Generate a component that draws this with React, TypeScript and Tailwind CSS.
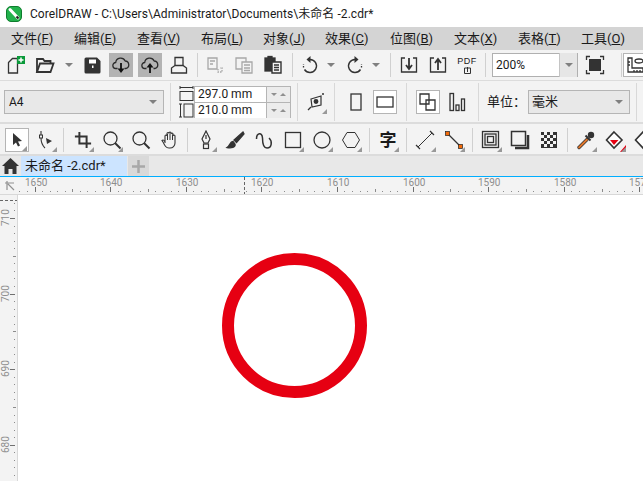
import type { ReactNode } from 'react';

const INK = '#333333';

// toolbar slot: 29px wide with a 24px box inside
function Slot({ children, active, on, corner, className = '' }: { children?: ReactNode; active?: boolean; on?: boolean; corner?: boolean; className?: string }) {
  return (
    <div className={`w-[29px] h-[24px] shrink-0 pl-[2px] ${className}`}>
      <div className={`relative w-[24px] h-[24px] flex items-center justify-center ${active ? 'bg-[#b3b3b3]' : ''} ${on ? 'bg-white border border-[#b5b5b5]' : ''}`}>
        {children}
        {corner && <span className="absolute right-px bottom-0 w-0 h-0 border-l-[5px] border-l-transparent border-b-[5px] border-b-[#999999]" />}
      </div>
    </div>
  );
}

function Sep({ className = '' }: { className?: string }) {
  return <div className={`w-px h-[24px] bg-[#d0d0d0] shrink-0 ${className}`} />;
}

function Tall({ className = '' }: { className?: string }) {
  return <div className={`w-px h-[38px] bg-[#d8d8d8] shrink-0 ${className}`} />;
}

function Drop({ className = '' }: { className?: string }) {
  return (
    <div className={`h-[24px] flex items-center justify-center shrink-0 ${className}`}>
      <span className="w-0 h-0 border-x-[4px] border-x-transparent border-t-[4px] border-t-[#808080]" />
    </div>
  );
}

function Ic({ children, size = 20, vb = 20 }: { children: ReactNode; size?: number; vb?: number }) {
  return (
    <svg width={size} height={size} viewBox={`0 0 ${vb} ${vb}`} fill="none" stroke={INK} strokeWidth="1.3">
      {children}
    </svg>
  );
}

const menus = [
  { t: '文件', k: 'F', w: 'w-[63px]' },
  { t: '编辑', k: 'E', w: 'w-[63px]' },
  { t: '查看', k: 'V', w: 'w-[64px]' },
  { t: '布局', k: 'L', w: 'w-[62px]' },
  { t: '对象', k: 'J', w: 'w-[62px]' },
  { t: '效果', k: 'C', w: 'w-[65px]' },
  { t: '位图', k: 'B', w: 'w-[64px]' },
  { t: '文本', k: 'X', w: 'w-[64px]' },
  { t: '表格', k: 'T', w: 'w-[63px]' },
  { t: '工具', k: 'O', w: 'w-[60px]' },
];

function Cloud({ up }: { up?: boolean }) {
  return (
    <Ic size={18} vb={18}>
      <path d="M5.500 12.500H4a3 3 0 0 1-.3-6A5 5 0 0 1 13.200 5a3.800 3.800 0 0 1 .6 7.500H12.500" stroke="#2b2b2b" />
      {up ? (
        <g>
          <path d="M9 17V10" stroke="#111111" strokeWidth="1.800" />
          <path d="M5.500 11.500 9 7l3.500 4.500z" fill="#111111" stroke="none" />
        </g>
      ) : (
        <g>
          <path d="M9 7v7" stroke="#111111" strokeWidth="1.800" />
          <path d="M5.500 12.500 9 17l3.500-4.500z" fill="#111111" stroke="none" />
        </g>
      )}
    </Ic>
  );
}

function TopRuler() {
  const labels = ['1650', '1640', '1630', '1620', '1610', '1600', '1590', '1580', '157'];
  const ticks: ReactNode[] = [];
  for (let i = -4; i < 86; i++) {
    const x = 34.5 + i * 7.56;
    if (i % 10 === 0) continue;
    const mid = i % 5 === 0;
    ticks.push(<rect key={i} x={Math.round(x)} y={mid ? 12 : 14} width="1" height={mid ? 3 : 1} fill="#8c8c8c" />);
  }
  return (
    <svg width="625" height="17" className="block" fontFamily="Roboto, sans-serif" fontSize="10">
      <g transform="translate(-18 0)">
        {labels.map((n, i) => {
          const x = Math.round(34.5 + i * 75.6);
          return (
            <g key={n}>
              <text x={x - 10} y={9} fill="#8e8e8e">{n}</text>
              <rect x={x} y={10} width="1" height="5" fill="#707070" />
            </g>
          );
        })}
        {ticks}
        <line x1="244.500" y1="0" x2="244.500" y2="17" stroke="#666666" strokeDasharray="3 2" />
      </g>
    </svg>
  );
}

function LeftRuler() {
  const ys = [218, 294, 369, 445];
  const labels = ['710', '700', '690', '680'];
  const ticks: ReactNode[] = [];
  for (let i = -2; i < 37; i++) {
    if (i % 10 === 0) continue;
    const y = 218 + i * 7.56 - 195;
    const mid = i % 5 === 0;
    ticks.push(<rect key={i} x={mid ? 13 : 14} y={Math.round(y)} width={mid ? 3 : 1} height="1" fill="#8c8c8c" />);
  }
  return (
    <svg width="17" height="286" className="block" fontFamily="Roboto, sans-serif" fontSize="10">
      <line x1="0" y1="5.500" x2="17" y2="5.500" stroke="#666666" strokeDasharray="3 2" />
      {ys.map((y, i) => (
        <g key={y}>
          <text transform={`translate(9 ${y - 195 + 8}) rotate(-90)`} fill="#8e8e8e">{labels[i]}</text>
          <rect x="10" y={y - 195} width="5" height="1" fill="#707070" />
        </g>
      ))}
      {ticks}
    </svg>
  );
}

export default function App() {
  return (
    <div className="w-[643px] h-[481px] overflow-hidden bg-white flex flex-col text-[#1a1a1a] font-['Roboto','Noto_Sans_CJK_SC',sans-serif]">
      {/* Title bar */}
      <div className="h-[27px] flex items-center shrink-0 pl-[6px]">
        <svg width="16" height="16" viewBox="0 0 16 16">
          <rect x="0.500" y="0.500" width="15" height="15" rx="4.500" fill="#22b14c" stroke="#0f7d2e" />
          <path d="M4 3.500 12 12" stroke="#ffffff" strokeWidth="3" strokeLinecap="round" />
          <path d="M10.500 10.500 12.500 12.500" stroke="#1c1c1c" strokeWidth="2" />
        </svg>
        <span className="ml-[8px] text-[12px] tracking-[0.06px] leading-none whitespace-nowrap">CorelDRAW - C:\Users\Administrator\Documents\未命名 -2.cdr*</span>
      </div>

      {/* Menu bar */}
      <div className="h-[23px] bg-[#d4d4d4] flex items-center shrink-0 pl-[11px] text-[13px]">
        {menus.map(m => (
          <div key={m.t} className={`${m.w} shrink-0 whitespace-nowrap`}>
            {m.t}(<u>{m.k}</u>)
          </div>
        ))}
      </div>

      {/* Standard toolbar */}
      <div className="h-[31px] bg-[#f3f3f3] border-b border-[#dcdcdc] flex items-center pl-[2px] shrink-0">
        <Slot>
          <Ic>
            <path d="M2.500 7.500 6.500 3.500h5V18h-9z" />
            <rect x="11" y="1" width="8" height="8" fill="#0a9a3a" stroke="none" />
            <path d="M15 2.500v5M12.500 5h5" stroke="#ffffff" strokeWidth="1.500" />
          </Ic>
        </Slot>
        <Slot>
          <Ic>
            <path d="M2 17V4h6l1.500 2h6v2.500" strokeWidth="1.800" />
            <path d="M2 17 5 8.500h13.500L15.500 17z" strokeWidth="1.800" />
          </Ic>
        </Slot>
        <Drop className="w-[18px]" />
        <Slot>
          <svg width="17" height="17" viewBox="0 0 17 17">
            <path d="M2 0.500h11l3.500 3.500v11a1.500 1.500 0 0 1-1.500 1.500H2A1.500 1.500 0 0 1 0.500 15V2A1.500 1.500 0 0 1 2 0.500z" fill={INK} />
            <rect x="5" y="2.500" width="7" height="4" fill="#ffffff" />
            <rect x="8" y="8.500" width="1.500" height="2.500" fill="#ffffff" />
          </svg>
        </Slot>
        <Slot active><Cloud /></Slot>
        <Slot active><Cloud up /></Slot>
        <Slot>
          <Ic>
            <path d="M6 10.500V2.500h8v8" />
            <path d="M6 10.500 2.500 13v5h15v-5L14 10.500z" />
          </Ic>
        </Slot>
        <Sep className="ml-[3px] mr-[3px]" />
        <Slot>
          <Ic>
            <g stroke="#a8a8a8">
              <path d="M3 3h9v11H3zM5 6h5M5 9h3" />
              <path d="M13 14v3h4v-4h-2" strokeDasharray="1.500 1" />
            </g>
          </Ic>
        </Slot>
        <Slot>
          <Ic>
            <g stroke="#a8a8a8">
              <path d="M2 3h10v11H2z" />
              <path d="M8 7h10v11H8zM10 10h6M10 13h6M10 15.500h6" fill="#f3f3f3" />
            </g>
          </Ic>
        </Slot>
        <Slot>
          <Ic>
            <rect x="2" y="3" width="10" height="13" fill={INK} />
            <rect x="5" y="1.500" width="4" height="3" fill={INK} />
            <path d="M9 7h9v11H9z" fill="#f3f3f3" strokeWidth="1.400" />
            <path d="M11 10h5M11 12.500h5M11 15h5" />
          </Ic>
        </Slot>
        <Sep className="ml-[4px] mr-[3px]" />
        <Slot>
          <Ic>
            <path d="M10 4.500a6.500 6.500 0 1 1-5.500 10" strokeWidth="1.400" />
            <path d="M3.500 12.500 3.500 9" strokeDasharray="1.500 1.500" />
            <path d="M10.500 1 6.500 4.500l4 3.500z" fill={INK} stroke="none" />
          </Ic>
        </Slot>
        <Drop className="w-[12px]" />
        <Slot className="ml-[4px]">
          <Ic>
            <path d="M10 4.500a6.500 6.500 0 1 0 5.500 10" strokeWidth="1.400" />
            <path d="M16.500 12.500 16.500 9" strokeDasharray="1.500 1.500" />
            <path d="M9.500 1l4 3.500-4 3.500z" fill={INK} stroke="none" />
          </Ic>
        </Slot>
        <Drop className="w-[12px]" />
        <Sep className="ml-[8px] mr-[4px]" />
        <Slot>
          <Ic>
            <path d="M6 3H2.500v14h15V3H14" />
            <path d="M10 3v10M7 10l3 4 3-4" strokeWidth="1.800" />
          </Ic>
        </Slot>
        <Slot>
          <Ic>
            <path d="M6 3H2.500v14h15V3H14" />
            <path d="M10 15V5M7 8l3-4 3 4" strokeWidth="1.800" />
          </Ic>
        </Slot>
        <Slot>
          <div className="flex flex-col items-center leading-none">
            <span className="text-[9px] leading-[10px] font-['Liberation_Sans',sans-serif] tracking-[0.5px]">PDF</span>
            <svg width="9" height="8" viewBox="0 0 9 8" fill="none" stroke={INK}><path d="M1.500 7.500V2H7.500V7.500zM4.500 1v5" /></svg>
          </div>
        </Slot>
        <Sep className="ml-[3px]" />
        <div className="ml-[6px] w-[86px] h-[24px] bg-white border border-[#b0b0b0] flex items-center shrink-0">
          <span className="flex-1 pl-[3px] text-[12px]">200%</span>
          <Drop className="w-[18px] h-[22px] bg-[#e6e6e6] border-l border-[#c4c4c4]" />
        </div>
        <Slot className="ml-[3px]">
          <Ic>
            <path d="M1.500 5V1.500H5M15 1.500h3.500V5M18.500 15v3.500H15M5 18.500H1.500V15" />
            <rect x="4" y="4" width="12" height="12" fill={INK} stroke="none" />
          </Ic>
        </Slot>
        <Sep className="ml-[11px] mr-[1px]" />
        <div className="w-[24px] h-[24px] bg-white border border-[#b5b5b5] shrink-0 flex items-center justify-center">
          <Ic size={18} vb={18}>
            <path d="M2 2v14h15v-4H6V2z" />
            <path d="M8 14v2M11 14v2M14 14v2M2 6h2M2 9h2" />
            <ellipse cx="13" cy="5" rx="4" ry="2" />
          </Ic>
        </div>
      </div>

      {/* Property bar */}
      <div className="h-[43px] bg-[#f3f3f3] border-b-2 border-[#dcdcdc] flex items-center pl-[4px] pt-px shrink-0">
        <div className="w-[160px] h-[24px] bg-[#e8e8e8] border border-[#b5b5b5] flex items-center justify-between pl-[4px] pr-[6px] text-[12px] shrink-0">
          A4
          <span className="w-0 h-0 border-x-[4px] border-x-transparent border-t-[4px] border-t-[#808080]" />
        </div>
        <Tall className="ml-[6px]" />
        <div className="ml-[8px] w-[15px] h-[32px] flex flex-col justify-between items-center shrink-0">
          <Ic size={15} vb={15}>
            <path d="M1 1.500h13M1 0v3M14 0v3" strokeWidth="1" />
            <rect x="1" y="5.500" width="13" height="9" strokeWidth="1" />
          </Ic>
          <Ic size={15} vb={15}>
            <path d="M1.500 1v13M0 1h3M0 14h3" strokeWidth="1" />
            <rect x="5" y="1" width="9" height="13" strokeWidth="1" />
          </Ic>
        </div>
        <div className="w-[97px] h-[32px] border border-[#b5b5b5] flex flex-col shrink-0 text-[12px]">
          {['297.0 mm', '210.0 mm'].map((v, i) => (
            <div key={v} className={`h-[15px] flex ${i === 0 ? 'border-b border-[#b5b5b5] h-[16px]' : ''}`}>
              <div className="w-[72px] bg-white pl-[3px] leading-[15px] border-r border-[#b5b5b5]">{v}</div>
              <div className="flex-1 bg-[#ececec] flex items-center justify-around px-[3px]">
                <span className="w-0 h-0 border-x-[3px] border-x-transparent border-t-[3px] border-t-[#909090]" />
                <span className="w-0 h-0 border-x-[3px] border-x-transparent border-b-[3px] border-b-[#909090]" />
              </div>
            </div>
          ))}
        </div>
        <Tall className="ml-[6px]" />
        <Slot className="ml-[4px]" corner>
          <Ic size={18} vb={18}>
            <path d="M4 6 14 3v9l-9 2z" strokeWidth="1.200" />
            <circle cx="9" cy="8.500" r="1.800" fill={INK} />
            <path d="M1 17l3-3M15 1l2 0" />
          </Ic>
        </Slot>
        <Tall className="ml-[3px] mr-[7px]" />
        <Slot>
          <Ic><rect x="5" y="2" width="10" height="16" /></Ic>
        </Slot>
        <Slot on>
          <Ic><rect x="2" y="5" width="16" height="10" /></Ic>
        </Slot>
        <Tall className="ml-[6px] mr-[7px]" />
        <Slot on>
          <Ic>
            <path d="M2 2h9v10H2z" />
            <path d="M8 8h9v10H8z" />
          </Ic>
        </Slot>
        <Slot>
          <Ic>
            <rect x="3" y="1.500" width="3.500" height="17" />
            <rect x="9" y="13" width="3" height="5.500" />
            <rect x="14.500" y="7" width="3" height="11.500" />
          </Ic>
        </Slot>
        <Tall className="ml-[6px] mr-[8px]" />
        <span className="text-[13px] w-[41px] shrink-0 whitespace-nowrap">单位：</span>
        <div className="w-[102px] h-[24px] bg-[#e8e8e8] border border-[#b5b5b5] flex items-center justify-between pl-[3px] pr-[6px] text-[13px] shrink-0">
          毫米
          <span className="w-0 h-0 border-x-[4px] border-x-transparent border-t-[4px] border-t-[#808080]" />
        </div>
        <Tall className="ml-[6px]" />
      </div>

      {/* Toolbox */}
      <div className="h-[32px] bg-[#f3f3f3] border-b-2 border-[#dcdcdc] flex items-center pl-[3px] pt-[2px] shrink-0">
        <Slot on corner>
          <svg width="14" height="16" viewBox="0 0 14 16"><path d="M3 1v12l3-2.500 2 4 2-1-2-4 4-.5z" fill={INK} /></svg>
        </Slot>
        <Slot corner>
          <Ic>
            <path d="M5 1v4M5 8c0 4 1 7 4 10" strokeWidth="1.100" />
            <rect x="3.500" y="5" width="3" height="3" strokeWidth="1" />
            <path d="M10 8l6 3-5 3z" fill={INK} stroke="none" />
          </Ic>
        </Slot>
        <Sep className="ml-[2px] mr-[5px]" />
        <Slot corner>
          <Ic size={18}>
            <path d="M6 1v13h13M1 6h13v13" strokeWidth="2.200" />
          </Ic>
        </Slot>
        <Slot corner>
          <Ic><circle cx="8.500" cy="8.500" r="6.500" /><path d="M13 13l5.500 5.500" strokeWidth="2" /></Ic>
        </Slot>
        <Slot>
          <Ic><circle cx="8.500" cy="8.500" r="6.500" /><path d="M13 13l5.500 5.500" strokeWidth="2" /></Ic>
        </Slot>
        <Slot>
          <Ic>
            <path d="M5 13V6a1 1 0 0 1 2 0V3.500a1 1 0 0 1 2 0V3a1 1 0 0 1 2 0v1a1 1 0 0 1 2 0v2a1 1 0 0 1 2 0v7a5 5 0 0 1-5 5H9c-3 0-4-2-6-6l-1-1.500c1-1 2-.5 3 1.500z" strokeWidth="1.100" />
            <path d="M7.500 4v6M10 3.500V10M12.500 4.500V10" strokeWidth="1" />
          </Ic>
        </Slot>
        <Sep className="ml-[2px] mr-[4px]" />
        <Slot corner>
          <Ic>
            <path d="M10 1 14 9l-2 4H8L6 9zM10 5v4" strokeWidth="1.200" />
            <rect x="7.500" y="14" width="5" height="4.500" strokeWidth="1.200" />
          </Ic>
        </Slot>
        <Slot>
          <Ic>
            <path d="M18 2 9 10l2.500 2.500L19 4z" fill={INK} />
            <path d="M8 11.500c-3 0-3 4-6 6 4 1 9 0 8-3.500z" fill={INK} />
          </Ic>
        </Slot>
        <Slot>
          <Ic>
            <path d="M2.500 9C2.500 3 8 1.500 8.500 8 8.500 13 9 18 13 18 18 18 18.500 11 15 8" strokeWidth="1.500" />
          </Ic>
        </Slot>
        <Slot corner>
          <Ic><rect x="2.500" y="2.500" width="15" height="15" /></Ic>
        </Slot>
        <Slot corner>
          <Ic><circle cx="10" cy="10" r="8" /></Ic>
        </Slot>
        <Slot corner>
          <Ic><path d="M6 2.500h8l4.500 7.500-4.500 7.500H6L1.500 10z" strokeWidth="1" /></Ic>
        </Slot>
        <Sep className="ml-[3px] mr-[4px]" />
        <Slot corner>
          <span className="text-[17px] font-bold leading-none">字</span>
        </Slot>
        <Sep className="ml-[3px] mr-[4px]" />
        <Slot corner>
          <Ic>
            <path d="M3 17 17 3" strokeWidth="1" />
            <path d="M1 15l4 4M15 1l4 4" strokeWidth="1.200" />
          </Ic>
        </Slot>
        <Slot corner>
          <Ic>
            <path d="M3.500 3.500l13 13" strokeWidth="1.300" />
            <rect x="1.500" y="1.500" width="4" height="4" fill="#f26a0a" stroke="#222222" strokeWidth="0.700" />
            <rect x="14.500" y="14.500" width="4" height="4" fill="#f26a0a" stroke="#222222" strokeWidth="0.700" />
          </Ic>
        </Slot>
        <Sep className="ml-[3px] mr-[4px]" />
        <Slot corner>
          <Ic>
            <rect x="1.500" y="1.500" width="16" height="16" />
            <rect x="4" y="4" width="11" height="11" />
            <rect x="6.500" y="6.500" width="6" height="6" />
          </Ic>
        </Slot>
        <Slot>
          <Ic>
            <rect x="1.500" y="1.500" width="14" height="14" strokeWidth="1.500" />
            <path d="M18 5v13H5" strokeWidth="2.500" />
          </Ic>
        </Slot>
        <Slot>
          <svg width="16" height="16" viewBox="0 0 16 16">
            <rect width="16" height="16" fill={INK} />
            <path d="M3 0h3v3H3zM9 0h3v3H9zM0 3h3v3H0zM6 3h3v3H6zM12 3h3v3h-3zM3 6h3v3H3zM9 6h3v3H9zM0 9h3v3H0zM6 9h3v3H6zM12 9h3v3h-3zM3 12h3v3H3zM9 12h3v3H9z" fill="#f3f3f3" />
          </svg>
        </Slot>
        <Sep className="ml-[3px] mr-[4px]" />
        <Slot corner>
          <Ic>
            <path d="M3 17.500 11 9.500" stroke="#333333" strokeWidth="3.400" strokeLinecap="round" />
            <path d="M3 17.500 11 9.500" stroke="#e2762a" strokeWidth="1.800" strokeLinecap="round" />
            <circle cx="15" cy="5" r="3.200" fill={INK} stroke="none" />
            <path d="M9.500 5.500 14.500 10.500" strokeWidth="2" />
          </Ic>
        </Slot>
        <Slot corner>
          <Ic>
            <path d="M9 2 17 10 9 18 1.500 10z" strokeWidth="1.600" fill="#ffffff" />
            <path d="M5 10h8.500L9 15z" fill="#e60012" stroke="none" />
          </Ic>
          <span className="absolute right-px bottom-0 w-0 h-0 border-l-[6px] border-l-transparent border-b-[7px] border-b-[#e60012]" />
        </Slot>
        <Slot>
          <Ic><path d="M9 2 17 10 9 18 1.500 10z" strokeWidth="1.600" fill="#ffffff" /></Ic>
        </Slot>
      </div>

      {/* Document tabs */}
      <div className="h-[21px] bg-[#e8e8e8] border-b-[1px] border-[#00aeff] flex items-stretch shrink-0">
        <div className="w-[21px] flex items-center justify-center shrink-0">
          <svg width="17" height="16" viewBox="0 0 17 16">
            <path d="M8.500 0 17 8h-2.500v8H10.500v-5h-4v5H2.500V8H0z" fill={INK} />
          </svg>
        </div>
        <div className="w-[106px] bg-[#cce4ff] text-[13px] leading-[20px] pl-[4px] whitespace-nowrap shrink-0">未命名 -2.cdr*</div>
        <div className="w-[21px] ml-px bg-[#d9d9d9] flex items-center justify-center shrink-0">
          <svg width="13" height="13" viewBox="0 0 13 13"><path d="M6.500 0v13M0 6.500h13" stroke="#a8a8a8" strokeWidth="2.500" /></svg>
        </div>
      </div>

      {/* Rulers and page */}
      <div className="flex h-[18px] bg-[#f3f3f3] border-b-[1px] border-[#d8d8d8] shrink-0">
        <div className="w-[18px] flex items-center justify-center shrink-0">
          <svg width="11" height="11" viewBox="0 0 11 11" fill="none" stroke="#909090" strokeWidth="1.200">
            <path d="M1 3h9M3 1v9M4 4l6 6" />
          </svg>
        </div>
        <TopRuler />
      </div>
      <div className="flex flex-1 min-h-0">
        <div className="w-[18px] bg-[#f3f3f3] border-r border-[#d8d8d8] shrink-0">
          <LeftRuler />
        </div>
        <div className="relative flex-1 bg-white">
          <div className="absolute left-[204px] top-[58px] w-[145px] h-[145px] rounded-full border-[12px] border-[#e60012]" />
        </div>
      </div>
    </div>
  );
}
